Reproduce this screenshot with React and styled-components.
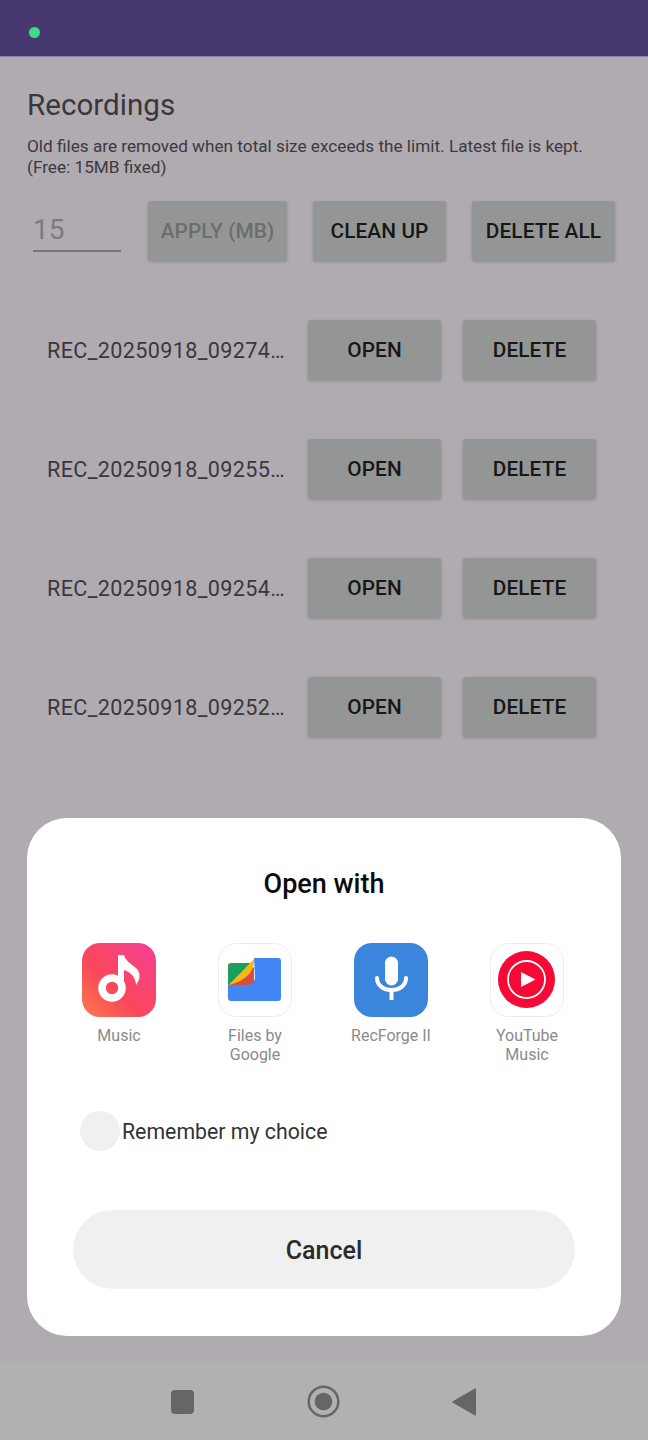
import React from 'react';
import styled, { createGlobalStyle } from 'styled-components';

const GlobalStyle = createGlobalStyle`
  html, body {
    margin: 0;
    padding: 0;
    background: #b0abb1;
  }
  * {
    box-sizing: border-box;
  }
`;

const Screen = styled.div`
  position: relative;
  width: 648px;
  height: 1440px;
  overflow: hidden;
  display: flex;
  flex-direction: column;
  background: #b0abb1;
  font-family: Roboto, "Liberation Sans", sans-serif;
`;

const StatusBar = styled.div`
  height: 57px;
  flex: none;
  padding: 27px 0 0 29px;
  background: #483870;
  border-bottom: 1px solid #8d83a3;
`;

const StatusDot = styled.div`
  width: 11px;
  height: 11px;
  border-radius: 50%;
  background: #3ddc84;
`;

const Content = styled.div`
  flex: 1;
  padding: 30px 26px 0 27px;
`;

const Title = styled.h1`
  margin: 0;
  font-size: 29.6px;
  line-height: 36px;
  font-weight: 400;
  color: #3a373c;
`;

const Note = styled.p`
  margin: 13px 0 0;
  font-size: 17.2px;
  line-height: 20.5px;
  color: #3c393e;
  white-space: nowrap;
`;

const Toolbar = styled.div`
  display: flex;
  align-items: flex-start;
  margin-top: 24px;
  padding-left: 6px;
`;

const LimitInput = styled.div`
  width: 88px;
  height: 51px;
  margin-right: 27px;
  padding: 12px 0 0 0;
  font-size: 28px;
  line-height: 34px;
  color: #7d7a7f;
  border-bottom: 2px solid #77747a;
`;

const ActionButton = styled.div`
  width: ${(p) => p.$w}px;
  height: 60px;
  margin-right: ${(p) => p.$gap || 0}px;
  display: flex;
  align-items: center;
  justify-content: center;
  flex: none;
  background: #949695;
  border-radius: 3px;
  box-shadow: 0 1px 3px rgba(60, 60, 60, 0.3);
  font-size: 20.8px;
  font-weight: 500;
  letter-spacing: 0.1px;
  color: ${(p) => (p.$disabled ? '#6c6d6d' : '#171717')};
`;

const FileList = styled.div`
  display: flex;
  flex-direction: column;
  gap: 59px;
  margin-top: 59px;
  padding-left: 20px;
`;

const FileRow = styled.div`
  display: flex;
  align-items: center;
`;

const FileName = styled.div`
  width: 261px;
  font-size: 21.6px;
  letter-spacing: 0.35px;
  color: #3a373c;
  white-space: nowrap;
`;

const Backdrop = styled.div`
  position: absolute;
  left: 27px;
  top: 818px;
  width: 594px;
  height: 518px;
  padding: 0 24px;
  background: #fff;
  border-radius: 40px;
`;

const DialogTitle = styled.div`
  margin-top: 49px;
  text-align: center;
  font-size: 27px;
  line-height: 34px;
  font-weight: 500;
  color: #0c0c0c;
`;

const AppGrid = styled.div`
  display: grid;
  grid-template-columns: repeat(4, 136px);
  margin-top: 42px;
  height: 168px;
`;

const AppItem = styled.div`
  display: flex;
  flex-direction: column;
  align-items: center;
`;

const AppIcon = styled.svg`
  width: 74px;
  height: 74px;
  display: block;
`;

const AppLabel = styled.div`
  margin-top: 9px;
  width: 92px;
  text-align: center;
  font-size: 16px;
  line-height: 19px;
  color: #8a8a8a;
`;

const RememberRow = styled.div`
  display: flex;
  align-items: center;
  height: 40px;
  margin-left: 29px;
`;

const RememberCircle = styled.div`
  width: 40px;
  height: 40px;
  margin-right: 2px;
  border-radius: 50%;
  background: #f0f0f0;
`;

const RememberText = styled.div`
  font-size: 21.3px;
  color: #333;
`;

const CancelButton = styled.div`
  height: 79px;
  margin: 59px 22px 0;
  padding-top: 2px;
  display: flex;
  align-items: center;
  justify-content: center;
  background: #f0f0f0;
  border-radius: 40px;
  font-size: 25px;
  font-weight: 500;
  color: #2b2b2b;
`;

const NavBar = styled.div`
  height: 78px;
  flex: none;
  display: flex;
  align-items: center;
  padding-left: 171px;
  background: #b1b1b1;
`;

const NavIcon = styled.svg`
  display: block;
  flex: none;
  margin-right: ${(p) => p.$gap}px;
  margin-top: 1px;
`;

const files = [
  'REC_20250918_09274…',
  'REC_20250918_09255…',
  'REC_20250918_09254…',
  'REC_20250918_09252…',
];

function MusicIcon() {
  return (
    <AppIcon viewBox="0 0 74 74">
      <defs>
        <linearGradient id="musicBg" x1="0" y1="1" x2="1" y2="0">
          <stop offset="0" stopColor="#fb7d4a" />
          <stop offset="0.4" stopColor="#f9485a" />
          <stop offset="1" stopColor="#f43f95" />
        </linearGradient>
      </defs>
      <rect width="74" height="74" rx="18" fill="url(#musicBg)" />
      <circle cx="30" cy="45" r="10" fill="none" stroke="#fff" strokeWidth="7.500" />
      <path d="M36 45 V12 h6 c2 7 8 9 13 14 c4 5 3 11 -1 16 c0 -7 -5 -13 -12 -15 V45 Z" fill="#fff" />
    </AppIcon>
  );
}

function FilesIcon() {
  return (
    <AppIcon viewBox="0 0 74 74">
      <rect x="0.5" y="0.5" width="73" height="73" rx="18" fill="#fff" stroke="#ececec" />
      <path d="M10 23 a3 3 0 0 1 3 -3 H33 L11 42 H10 Z" fill="#1e9e5a" />
      <path d="M11 42 L36 24 V42 Z" fill="#d94d3f" />
      <path d="M11 42 L36 16 C36 22 35 26 32 30 C28 35 20 40 11 42 Z" fill="#f9b80f" />
      <path d="M36 15 H60 a3 3 0 0 1 3 3 V55 a3 3 0 0 1 -3 3 H13 a3 3 0 0 1 -3 -3 V42 H29 C34 42 37 38 37 34 Z" fill="#4285f4" />
    </AppIcon>
  );
}

function RecForgeIcon() {
  return (
    <AppIcon viewBox="0 0 74 74">
      <rect width="74" height="74" rx="18" fill="#3b86dc" />
      <rect x="31" y="13.500" width="13" height="29" rx="6.500" fill="#fff" />
      <path d="M23 35 C23 42 29 47 37.500 47 C46 47 52 42 52 35" fill="none" stroke="#fff" strokeWidth="4" strokeLinecap="round" />
      <rect x="35.500" y="46" width="4" height="11" fill="#fff" />
    </AppIcon>
  );
}

function YouTubeMusicIcon() {
  return (
    <AppIcon viewBox="0 0 74 74">
      <rect x="0.5" y="0.5" width="73" height="73" rx="18" fill="#fff" stroke="#ececec" />
      <circle cx="36.500" cy="36.500" r="28.500" fill="#f50a36" />
      <circle cx="36.500" cy="36.500" r="18.500" fill="none" stroke="#fff" strokeWidth="1.800" />
      <path d="M31 29 L45.500 36.500 L31 44 Z" fill="#fff" />
    </AppIcon>
  );
}

const apps = [
  { name: 'Music', Icon: MusicIcon },
  { name: 'Files by Google', Icon: FilesIcon },
  { name: 'RecForge II', Icon: RecForgeIcon },
  { name: 'YouTube Music', Icon: YouTubeMusicIcon },
];

export default function App() {
  return (
    <Screen>
      <GlobalStyle />
      <StatusBar>
        <StatusDot />
      </StatusBar>

      <Content>
        <Title>Recordings</Title>
        <Note>
          Old files are removed when total size exceeds the limit. Latest file is kept.
          <br />
          (Free: 15MB fixed)
        </Note>

        <Toolbar>
          <LimitInput>15</LimitInput>
          <ActionButton $w={139} $gap={26} $disabled>APPLY (MB)</ActionButton>
          <ActionButton $w={133} $gap={26}>CLEAN UP</ActionButton>
          <ActionButton $w={143}>DELETE ALL</ActionButton>
        </Toolbar>

        <FileList>
          {files.map((name) => (
            <FileRow key={name}>
              <FileName>{name}</FileName>
              <ActionButton $w={133} $gap={22}>OPEN</ActionButton>
              <ActionButton $w={133}>DELETE</ActionButton>
            </FileRow>
          ))}
        </FileList>
      </Content>

      <Backdrop>
        <DialogTitle>Open with</DialogTitle>
        <AppGrid>
          {apps.map(({ name, Icon }) => (
            <AppItem key={name}>
              <Icon />
              <AppLabel>{name}</AppLabel>
            </AppItem>
          ))}
        </AppGrid>
        <RememberRow>
          <RememberCircle />
          <RememberText>Remember my choice</RememberText>
        </RememberRow>
        <CancelButton>Cancel</CancelButton>
      </Backdrop>

      <NavBar>
        <NavIcon width="23" height="24" viewBox="0 0 23 24" $gap={113}>
          <rect width="23" height="24" rx="4" fill="#666" />
        </NavIcon>
        <NavIcon width="33" height="33" viewBox="0 0 33 33" $gap={112}>
          <circle cx="16.500" cy="16.500" r="14.800" fill="none" stroke="#666" strokeWidth="2.500" />
          <circle cx="16.500" cy="16.500" r="8.800" fill="#666" />
        </NavIcon>
        <NavIcon width="24" height="28" viewBox="0 0 24 28" $gap={0}>
          <path d="M22.500 0.800 a1 1 0 0 1 1.500 0.800 V26.400 a1 1 0 0 1 -1.500 0.800 L0.800 14.800 a1 1 0 0 1 0 -1.600 Z" fill="#666" />
        </NavIcon>
      </NavBar>
    </Screen>
  );
}
